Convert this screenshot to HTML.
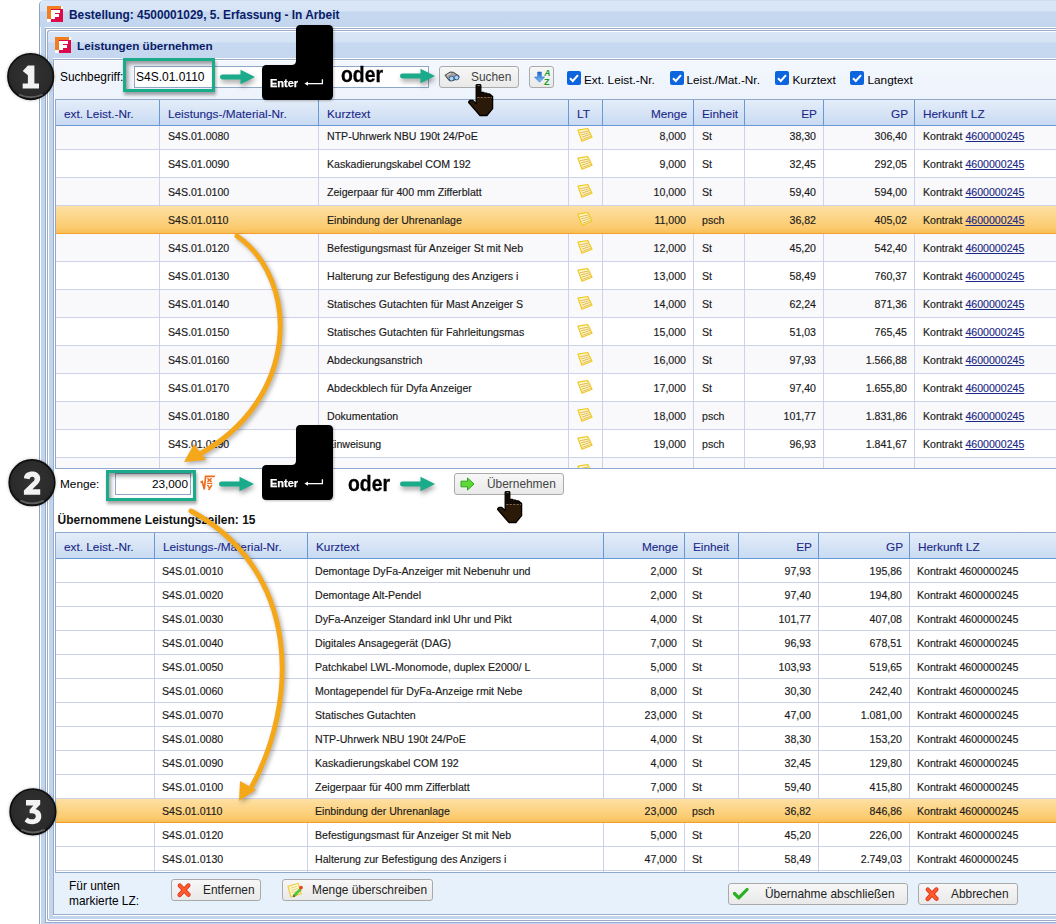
<!DOCTYPE html>
<html><head><meta charset="utf-8"><title>Leistungen übernehmen</title>
<style>
html,body{margin:0;padding:0;}
body{width:1056px;height:924px;position:relative;overflow:hidden;background:#fff;font-family:"Liberation Sans",sans-serif;}
.abs{position:absolute;}
.outer{position:absolute;left:39px;top:0;width:1100px;height:940px;background:#c2d5ed;box-shadow:inset 1px 0 0 #fff;border-left:1px solid #8da5c5;border-top:1px solid #d0ddef;border-top-left-radius:5px;box-sizing:border-box;}
.otitle{position:absolute;left:40px;top:1px;width:1100px;height:26px;background:linear-gradient(#dbe7f7 0,#d6e4f5 10px,#c5d8ef 11px,#c3d6ee 26px);border-top-left-radius:4px;}
.frameA{position:absolute;left:45px;top:28px;width:1100px;height:895px;border:1px solid #9aacc9;border-right:none;background:#fff;box-sizing:border-box;box-shadow:0 -1px 0 #fff;}
.winB{position:absolute;left:47px;top:30px;width:1100px;height:891px;border:1px solid #9aacc9;border-right:none;border-radius:3px 0 0 3px;background:#c2d5ed;box-sizing:border-box;box-shadow:inset 1px 1px 0 #fff, inset 0 -1px 0 #fff;}
.ititle{position:absolute;left:48px;top:32px;width:1100px;height:27px;background:linear-gradient(#d9e6f6 0,#d6e4f5 10px,#c7d9f0 11px,#c4d7ee 27px);border-top-left-radius:2px;}
.panel{position:absolute;left:53px;top:59px;width:1100px;height:856px;border:1px solid #9aacc9;border-right:none;background:#fff;box-sizing:border-box;box-shadow:inset 1px 1px 0 #fff, 0 1px 0 #fff, 0 -1px 0 #fff;}
.toolbar{position:absolute;left:55px;top:61px;width:1100px;height:39px;background:linear-gradient(#f3f7fd,#edf3fc);}
.footer{position:absolute;left:54px;top:873px;width:1100px;height:41px;background:#e7f1fc;}
.ttl{position:absolute;font-weight:bold;font-size:11.8px;color:#15307e;white-space:nowrap;}
.lbl{position:absolute;font-size:11.9px;color:#000;white-space:nowrap;}
.fico{position:absolute;width:16px;height:16px;}
/* tables */
.tbl{position:absolute;border:1px solid #8fa9cc;border-right:none;box-sizing:border-box;overflow:hidden;background:#fff;}
.hdr{position:absolute;left:0;width:100%;background:linear-gradient(#e4edf9,#c9dbf2);border-bottom:1px solid #6a98d4;box-sizing:border-box;}
.hc{position:absolute;top:0;height:25px;line-height:25px;font-size:11.8px;color:#1a2888;-webkit-text-stroke:0.1px #1a2888;border-right:1px solid #6a98d4;box-sizing:border-box;padding:2px 6px 0 8px;white-space:nowrap;overflow:hidden;}
.hc.r{text-align:right;padding-right:6px;}
.row{position:absolute;left:0;width:100%;background:#fff;border-bottom:1px solid #cdd2ea;box-sizing:border-box;}
.row.alt{background:#f9f9fb;}
.row.alt2{background:#fff;}
.row.sel .c{border-right-color:transparent;}
.row.sel{background:linear-gradient(#fee0a3,#fbcb70 80%,#f9bf56);border-bottom:1px solid #f59c2c;}
.c{position:absolute;top:0;height:100%;border-right:1px solid #cdd2ea;box-sizing:border-box;white-space:nowrap;overflow:hidden;color:#1a1a1a;padding:0 8px;-webkit-text-stroke:0.15px #1a1a1a;}
.c.r{text-align:right;padding-right:7px;}
.t1{font-size:10.6px;line-height:28px;padding-top:0;}
.t2{font-size:10.6px;line-height:24px;padding-top:0;padding-left:7px;}
.c u{color:#1b2b85;-webkit-text-stroke:0.15px #1b2b85;}
.note{position:absolute;left:0;top:0;}
.btn{position:absolute;height:22px;box-sizing:border-box;border:1px solid #aaaaaa;border-radius:3px;background:linear-gradient(#f7f7f7,#e9e9e9);font-size:11.9px;color:#333;white-space:nowrap;}
.btn span{position:absolute;top:3px;}
.chk{position:absolute;width:14px;height:14px;border-radius:2px;background:#0c64de;}
.teal{position:absolute;border:3px solid #19ab8a;box-sizing:border-box;box-shadow:1px 3px 3px rgba(0,0,0,.35), inset 2px 3px 4px rgba(0,0,0,.4);}
.input{position:absolute;background:#fff;border:1px solid #8ea6c8;box-sizing:border-box;font-size:12px;color:#000;white-space:nowrap;}
.num{position:absolute;width:47px;height:47px;border-radius:50%;background:#2b2b2b;box-sizing:border-box;border:2px solid #111;box-shadow:0 1px 2px rgba(0,0,0,.3);}
.num span{position:absolute;left:0;width:100%;text-align:center;font-weight:bold;color:#f4f4f4;font-size:30px;}
.oder{position:absolute;font-weight:bold;font-size:19px;color:#000;}

</style></head><body>
<div class="outer"></div>
<div class="otitle"></div>
<svg class="fico" style="left:47px;top:6px" viewBox="0 0 16 16" width="16" height="16" shape-rendering="crispEdges">
<rect x="0" y="0" width="13.5" height="12.5" fill="#f07d1e"/><rect x="3.5" y="3" width="12.5" height="13" fill="#dc0a48"/>
<rect x="13.5" y="0" width="2.5" height="3" fill="#fff"/><rect x="0" y="12.5" width="3.5" height="3.5" fill="#fff"/>
<path d="M4.3 3.5h9v3.2h-5.2v1.6h4.2v2.8h-4.2v1.9h-3.8z" fill="#fff"/></svg>
<div class="abs" style="left:69px;top:4.88px;height:20px;line-height:20px;font-size:11.9px;font-weight:bold;white-space:nowrap;color:#0a1c68;">Bestellung: 4500001029, 5. Erfassung - In Arbeit</div>
<div class="frameA"></div>
<div class="winB"></div>
<div class="ititle"></div>
<svg class="fico" style="left:55px;top:37px" viewBox="0 0 16 16" width="16" height="16" shape-rendering="crispEdges">
<rect x="0" y="0" width="13.5" height="12.5" fill="#f07d1e"/><rect x="3.5" y="3" width="12.5" height="13" fill="#dc0a48"/>
<rect x="13.5" y="0" width="2.5" height="3" fill="#fff"/><rect x="0" y="12.5" width="3.5" height="3.5" fill="#fff"/>
<path d="M4.3 3.5h9v3.2h-5.2v1.6h4.2v2.8h-4.2v1.9h-3.8z" fill="#fff"/></svg>
<div class="abs" style="left:77px;top:35.95px;height:20px;line-height:20px;font-size:11.7px;font-weight:bold;white-space:nowrap;color:#0a1c68;">Leistungen übernehmen</div>
<div class="panel"></div>
<div class="toolbar"></div>
<div class="footer"></div>
<div class="abs" style="left:60px;top:66.88px;height:20px;line-height:20px;font-size:11.9px;font-weight:normal;white-space:nowrap;">Suchbegriff:</div>
<div class="input" style="left:134px;top:66px;width:295px;height:22px"></div>
<div class="abs" style="left:136px;top:66.84px;height:20px;line-height:20px;font-size:12px;font-weight:normal;white-space:nowrap;">S4S.01.0110</div>
<div class="btn" style="left:439px;top:66px;width:80px;height:22px"></div>
<svg class="abs" style="left:444px;top:71px" width="16" height="11" viewBox="0 0 16 11">
<path d="M1 4.3 L6.3 1 L9.6 1.4 L15 5 L14.6 7.6 L9 9.4 L5.4 9.8 Z" fill="#a3a3a3" stroke="#3c3c3c" stroke-width="1"/>
<path d="M3 4.2 L6.8 2.3" stroke="#e8e8e8" stroke-width="0.9"/>
<circle cx="7.6" cy="7.6" r="2.4" fill="#a6d2ff" stroke="#2c4c74" stroke-width="0.8"/>
<circle cx="12.6" cy="6.6" r="2.3" fill="#a6d2ff" stroke="#2c4c74" stroke-width="0.8"/></svg>
<div class="abs" style="left:471px;top:66.88px;height:20px;line-height:20px;font-size:11.9px;font-weight:normal;white-space:nowrap;color:#444;">Suchen</div>
<div class="btn" style="left:529px;top:66px;width:25px;height:22px"></div>
<svg class="abs" style="left:534px;top:69px" width="17" height="16" viewBox="0 0 17 16">
<defs><linearGradient id="ga" x1="0" y1="0" x2="0" y2="1"><stop offset="0" stop-color="#1a64c8"/><stop offset="1" stop-color="#86c6ff"/></linearGradient></defs>
<path d="M3.6 3h3.8v5h3.1l-5 5.2 -5-5.2h3.1z" fill="url(#ga)" stroke="#2a74d4" stroke-width="0.6"/>
<text x="10.2" y="7.2" font-family="Liberation Sans" font-weight="bold" font-style="italic" font-size="8.5" fill="#16a01e">A</text>
<text x="10" y="15.6" font-family="Liberation Sans" font-weight="bold" font-size="9" fill="#16a01e">Z</text></svg>
<div class="chk" style="left:567px;top:71px"><svg width="14" height="14" viewBox="0 0 14 14" style="position:absolute;left:0;top:0"><path d="M3 7.2 L5.8 10 L11 4.2" fill="none" stroke="#fff" stroke-width="2"/></svg></div>
<div class="abs" style="left:584px;top:69.91px;height:20px;line-height:20px;font-size:11.8px;font-weight:normal;white-space:nowrap;">Ext. Leist.-Nr.</div>
<div class="chk" style="left:670px;top:71px"><svg width="14" height="14" viewBox="0 0 14 14" style="position:absolute;left:0;top:0"><path d="M3 7.2 L5.8 10 L11 4.2" fill="none" stroke="#fff" stroke-width="2"/></svg></div>
<div class="abs" style="left:686.5px;top:69.91px;height:20px;line-height:20px;font-size:11.8px;font-weight:normal;white-space:nowrap;">Leist./Mat.-Nr.</div>
<div class="chk" style="left:775px;top:71px"><svg width="14" height="14" viewBox="0 0 14 14" style="position:absolute;left:0;top:0"><path d="M3 7.2 L5.8 10 L11 4.2" fill="none" stroke="#fff" stroke-width="2"/></svg></div>
<div class="abs" style="left:792.5px;top:69.91px;height:20px;line-height:20px;font-size:11.8px;font-weight:normal;white-space:nowrap;">Kurztext</div>
<div class="chk" style="left:850px;top:71px"><svg width="14" height="14" viewBox="0 0 14 14" style="position:absolute;left:0;top:0"><path d="M3 7.2 L5.8 10 L11 4.2" fill="none" stroke="#fff" stroke-width="2"/></svg></div>
<div class="abs" style="left:867.5px;top:69.91px;height:20px;line-height:20px;font-size:11.8px;font-weight:normal;white-space:nowrap;">Langtext</div>
<div class="tbl" style="left:55px;top:99px;width:1050px;height:370px">
<div class="row alt" style="top:22px;height:28px">
<div class="c t1 l" style="left:0px;width:104px"></div>
<div class="c t1 l" style="left:104px;width:159px">S4S.01.0080</div>
<div class="c t1 l" style="left:263px;width:250px">NTP-Uhrwerk NBU 190t 24/PoE</div>
<div class="c" style="left:513px;width:34px"><svg class="note" width="28" height="28" viewBox="0 0 28 28"><path d="M9 8.2 L18.7 6.5 L23 15.3 L13 19.3 Z" fill="#fff9c4" stroke="#f0c620" stroke-width="1.2" stroke-linejoin="round"/><path d="M11 10.8 L19 9 M11.8 13 L19.9 10.8 M12.6 15.2 L20.8 12.5 M13.3 17.3 L21.6 14.3" stroke="#dcb050" stroke-width="0.9"/></svg></div>
<div class="c t1 r" style="left:547px;width:91px">8,000</div>
<div class="c t1 l" style="left:638px;width:51px">St</div>
<div class="c t1 r" style="left:689px;width:79px">38,30</div>
<div class="c t1 r" style="left:768px;width:91px">306,40</div>
<div class="c t1" style="left:859px;width:186px">Kontrakt <u>4600000245</u></div>
</div>
<div class="row" style="top:50px;height:28px">
<div class="c t1 l" style="left:0px;width:104px"></div>
<div class="c t1 l" style="left:104px;width:159px">S4S.01.0090</div>
<div class="c t1 l" style="left:263px;width:250px">Kaskadierungskabel COM 192</div>
<div class="c" style="left:513px;width:34px"><svg class="note" width="28" height="28" viewBox="0 0 28 28"><path d="M9 8.2 L18.7 6.5 L23 15.3 L13 19.3 Z" fill="#fff9c4" stroke="#f0c620" stroke-width="1.2" stroke-linejoin="round"/><path d="M11 10.8 L19 9 M11.8 13 L19.9 10.8 M12.6 15.2 L20.8 12.5 M13.3 17.3 L21.6 14.3" stroke="#dcb050" stroke-width="0.9"/></svg></div>
<div class="c t1 r" style="left:547px;width:91px">9,000</div>
<div class="c t1 l" style="left:638px;width:51px">St</div>
<div class="c t1 r" style="left:689px;width:79px">32,45</div>
<div class="c t1 r" style="left:768px;width:91px">292,05</div>
<div class="c t1" style="left:859px;width:186px">Kontrakt <u>4600000245</u></div>
</div>
<div class="row alt" style="top:78px;height:28px">
<div class="c t1 l" style="left:0px;width:104px"></div>
<div class="c t1 l" style="left:104px;width:159px">S4S.01.0100</div>
<div class="c t1 l" style="left:263px;width:250px">Zeigerpaar für 400 mm Zifferblatt</div>
<div class="c" style="left:513px;width:34px"><svg class="note" width="28" height="28" viewBox="0 0 28 28"><path d="M9 8.2 L18.7 6.5 L23 15.3 L13 19.3 Z" fill="#fff9c4" stroke="#f0c620" stroke-width="1.2" stroke-linejoin="round"/><path d="M11 10.8 L19 9 M11.8 13 L19.9 10.8 M12.6 15.2 L20.8 12.5 M13.3 17.3 L21.6 14.3" stroke="#dcb050" stroke-width="0.9"/></svg></div>
<div class="c t1 r" style="left:547px;width:91px">10,000</div>
<div class="c t1 l" style="left:638px;width:51px">St</div>
<div class="c t1 r" style="left:689px;width:79px">59,40</div>
<div class="c t1 r" style="left:768px;width:91px">594,00</div>
<div class="c t1" style="left:859px;width:186px">Kontrakt <u>4600000245</u></div>
</div>
<div class="row sel" style="top:106px;height:28px">
<div class="c t1 l" style="left:0px;width:104px"></div>
<div class="c t1 l" style="left:104px;width:159px">S4S.01.0110</div>
<div class="c t1 l" style="left:263px;width:250px">Einbindung der Uhrenanlage</div>
<div class="c" style="left:513px;width:34px"><svg class="note" width="28" height="28" viewBox="0 0 28 28"><path d="M9 8.2 L18.7 6.5 L23 15.3 L13 19.3 Z" fill="#fff9c4" stroke="#f0c620" stroke-width="1.2" stroke-linejoin="round"/><path d="M11 10.8 L19 9 M11.8 13 L19.9 10.8 M12.6 15.2 L20.8 12.5 M13.3 17.3 L21.6 14.3" stroke="#dcb050" stroke-width="0.9"/></svg></div>
<div class="c t1 r" style="left:547px;width:91px">11,000</div>
<div class="c t1 l" style="left:638px;width:51px">psch</div>
<div class="c t1 r" style="left:689px;width:79px">36,82</div>
<div class="c t1 r" style="left:768px;width:91px">405,02</div>
<div class="c t1" style="left:859px;width:186px">Kontrakt <u>4600000245</u></div>
</div>
<div class="row alt" style="top:134px;height:28px">
<div class="c t1 l" style="left:0px;width:104px"></div>
<div class="c t1 l" style="left:104px;width:159px">S4S.01.0120</div>
<div class="c t1 l" style="left:263px;width:250px">Befestigungsmast für Anzeiger St mit Neb</div>
<div class="c" style="left:513px;width:34px"><svg class="note" width="28" height="28" viewBox="0 0 28 28"><path d="M9 8.2 L18.7 6.5 L23 15.3 L13 19.3 Z" fill="#fff9c4" stroke="#f0c620" stroke-width="1.2" stroke-linejoin="round"/><path d="M11 10.8 L19 9 M11.8 13 L19.9 10.8 M12.6 15.2 L20.8 12.5 M13.3 17.3 L21.6 14.3" stroke="#dcb050" stroke-width="0.9"/></svg></div>
<div class="c t1 r" style="left:547px;width:91px">12,000</div>
<div class="c t1 l" style="left:638px;width:51px">St</div>
<div class="c t1 r" style="left:689px;width:79px">45,20</div>
<div class="c t1 r" style="left:768px;width:91px">542,40</div>
<div class="c t1" style="left:859px;width:186px">Kontrakt <u>4600000245</u></div>
</div>
<div class="row" style="top:162px;height:28px">
<div class="c t1 l" style="left:0px;width:104px"></div>
<div class="c t1 l" style="left:104px;width:159px">S4S.01.0130</div>
<div class="c t1 l" style="left:263px;width:250px">Halterung zur Befestigung des Anzigers i</div>
<div class="c" style="left:513px;width:34px"><svg class="note" width="28" height="28" viewBox="0 0 28 28"><path d="M9 8.2 L18.7 6.5 L23 15.3 L13 19.3 Z" fill="#fff9c4" stroke="#f0c620" stroke-width="1.2" stroke-linejoin="round"/><path d="M11 10.8 L19 9 M11.8 13 L19.9 10.8 M12.6 15.2 L20.8 12.5 M13.3 17.3 L21.6 14.3" stroke="#dcb050" stroke-width="0.9"/></svg></div>
<div class="c t1 r" style="left:547px;width:91px">13,000</div>
<div class="c t1 l" style="left:638px;width:51px">St</div>
<div class="c t1 r" style="left:689px;width:79px">58,49</div>
<div class="c t1 r" style="left:768px;width:91px">760,37</div>
<div class="c t1" style="left:859px;width:186px">Kontrakt <u>4600000245</u></div>
</div>
<div class="row alt" style="top:190px;height:28px">
<div class="c t1 l" style="left:0px;width:104px"></div>
<div class="c t1 l" style="left:104px;width:159px">S4S.01.0140</div>
<div class="c t1 l" style="left:263px;width:250px">Statisches Gutachten für Mast Anzeiger S</div>
<div class="c" style="left:513px;width:34px"><svg class="note" width="28" height="28" viewBox="0 0 28 28"><path d="M9 8.2 L18.7 6.5 L23 15.3 L13 19.3 Z" fill="#fff9c4" stroke="#f0c620" stroke-width="1.2" stroke-linejoin="round"/><path d="M11 10.8 L19 9 M11.8 13 L19.9 10.8 M12.6 15.2 L20.8 12.5 M13.3 17.3 L21.6 14.3" stroke="#dcb050" stroke-width="0.9"/></svg></div>
<div class="c t1 r" style="left:547px;width:91px">14,000</div>
<div class="c t1 l" style="left:638px;width:51px">St</div>
<div class="c t1 r" style="left:689px;width:79px">62,24</div>
<div class="c t1 r" style="left:768px;width:91px">871,36</div>
<div class="c t1" style="left:859px;width:186px">Kontrakt <u>4600000245</u></div>
</div>
<div class="row" style="top:218px;height:28px">
<div class="c t1 l" style="left:0px;width:104px"></div>
<div class="c t1 l" style="left:104px;width:159px">S4S.01.0150</div>
<div class="c t1 l" style="left:263px;width:250px">Statisches Gutachten für Fahrleitungsmas</div>
<div class="c" style="left:513px;width:34px"><svg class="note" width="28" height="28" viewBox="0 0 28 28"><path d="M9 8.2 L18.7 6.5 L23 15.3 L13 19.3 Z" fill="#fff9c4" stroke="#f0c620" stroke-width="1.2" stroke-linejoin="round"/><path d="M11 10.8 L19 9 M11.8 13 L19.9 10.8 M12.6 15.2 L20.8 12.5 M13.3 17.3 L21.6 14.3" stroke="#dcb050" stroke-width="0.9"/></svg></div>
<div class="c t1 r" style="left:547px;width:91px">15,000</div>
<div class="c t1 l" style="left:638px;width:51px">St</div>
<div class="c t1 r" style="left:689px;width:79px">51,03</div>
<div class="c t1 r" style="left:768px;width:91px">765,45</div>
<div class="c t1" style="left:859px;width:186px">Kontrakt <u>4600000245</u></div>
</div>
<div class="row alt" style="top:246px;height:28px">
<div class="c t1 l" style="left:0px;width:104px"></div>
<div class="c t1 l" style="left:104px;width:159px">S4S.01.0160</div>
<div class="c t1 l" style="left:263px;width:250px">Abdeckungsanstrich</div>
<div class="c" style="left:513px;width:34px"><svg class="note" width="28" height="28" viewBox="0 0 28 28"><path d="M9 8.2 L18.7 6.5 L23 15.3 L13 19.3 Z" fill="#fff9c4" stroke="#f0c620" stroke-width="1.2" stroke-linejoin="round"/><path d="M11 10.8 L19 9 M11.8 13 L19.9 10.8 M12.6 15.2 L20.8 12.5 M13.3 17.3 L21.6 14.3" stroke="#dcb050" stroke-width="0.9"/></svg></div>
<div class="c t1 r" style="left:547px;width:91px">16,000</div>
<div class="c t1 l" style="left:638px;width:51px">St</div>
<div class="c t1 r" style="left:689px;width:79px">97,93</div>
<div class="c t1 r" style="left:768px;width:91px">1.566,88</div>
<div class="c t1" style="left:859px;width:186px">Kontrakt <u>4600000245</u></div>
</div>
<div class="row" style="top:274px;height:28px">
<div class="c t1 l" style="left:0px;width:104px"></div>
<div class="c t1 l" style="left:104px;width:159px">S4S.01.0170</div>
<div class="c t1 l" style="left:263px;width:250px">Abdeckblech für Dyfa Anzeiger</div>
<div class="c" style="left:513px;width:34px"><svg class="note" width="28" height="28" viewBox="0 0 28 28"><path d="M9 8.2 L18.7 6.5 L23 15.3 L13 19.3 Z" fill="#fff9c4" stroke="#f0c620" stroke-width="1.2" stroke-linejoin="round"/><path d="M11 10.8 L19 9 M11.8 13 L19.9 10.8 M12.6 15.2 L20.8 12.5 M13.3 17.3 L21.6 14.3" stroke="#dcb050" stroke-width="0.9"/></svg></div>
<div class="c t1 r" style="left:547px;width:91px">17,000</div>
<div class="c t1 l" style="left:638px;width:51px">St</div>
<div class="c t1 r" style="left:689px;width:79px">97,40</div>
<div class="c t1 r" style="left:768px;width:91px">1.655,80</div>
<div class="c t1" style="left:859px;width:186px">Kontrakt <u>4600000245</u></div>
</div>
<div class="row alt" style="top:302px;height:28px">
<div class="c t1 l" style="left:0px;width:104px"></div>
<div class="c t1 l" style="left:104px;width:159px">S4S.01.0180</div>
<div class="c t1 l" style="left:263px;width:250px">Dokumentation</div>
<div class="c" style="left:513px;width:34px"><svg class="note" width="28" height="28" viewBox="0 0 28 28"><path d="M9 8.2 L18.7 6.5 L23 15.3 L13 19.3 Z" fill="#fff9c4" stroke="#f0c620" stroke-width="1.2" stroke-linejoin="round"/><path d="M11 10.8 L19 9 M11.8 13 L19.9 10.8 M12.6 15.2 L20.8 12.5 M13.3 17.3 L21.6 14.3" stroke="#dcb050" stroke-width="0.9"/></svg></div>
<div class="c t1 r" style="left:547px;width:91px">18,000</div>
<div class="c t1 l" style="left:638px;width:51px">psch</div>
<div class="c t1 r" style="left:689px;width:79px">101,77</div>
<div class="c t1 r" style="left:768px;width:91px">1.831,86</div>
<div class="c t1" style="left:859px;width:186px">Kontrakt <u>4600000245</u></div>
</div>
<div class="row" style="top:330px;height:28px">
<div class="c t1 l" style="left:0px;width:104px"></div>
<div class="c t1 l" style="left:104px;width:159px">S4S.01.0190</div>
<div class="c t1 l" style="left:263px;width:250px">Einweisung</div>
<div class="c" style="left:513px;width:34px"><svg class="note" width="28" height="28" viewBox="0 0 28 28"><path d="M9 8.2 L18.7 6.5 L23 15.3 L13 19.3 Z" fill="#fff9c4" stroke="#f0c620" stroke-width="1.2" stroke-linejoin="round"/><path d="M11 10.8 L19 9 M11.8 13 L19.9 10.8 M12.6 15.2 L20.8 12.5 M13.3 17.3 L21.6 14.3" stroke="#dcb050" stroke-width="0.9"/></svg></div>
<div class="c t1 r" style="left:547px;width:91px">19,000</div>
<div class="c t1 l" style="left:638px;width:51px">psch</div>
<div class="c t1 r" style="left:689px;width:79px">96,93</div>
<div class="c t1 r" style="left:768px;width:91px">1.841,67</div>
<div class="c t1" style="left:859px;width:186px">Kontrakt <u>4600000245</u></div>
</div>
<div class="row alt" style="top:358px;height:28px">
<div class="c t1 l" style="left:0px;width:104px"></div>
<div class="c t1 l" style="left:104px;width:159px"></div>
<div class="c t1 l" style="left:263px;width:250px"></div>
<div class="c" style="left:513px;width:34px"><svg class="note" width="28" height="28" viewBox="0 0 28 28"><path d="M9 8.2 L18.7 6.5 L23 15.3 L13 19.3 Z" fill="#fff9c4" stroke="#f0c620" stroke-width="1.2" stroke-linejoin="round"/><path d="M11 10.8 L19 9 M11.8 13 L19.9 10.8 M12.6 15.2 L20.8 12.5 M13.3 17.3 L21.6 14.3" stroke="#dcb050" stroke-width="0.9"/></svg></div>
<div class="c t1 r" style="left:547px;width:91px"></div>
<div class="c t1 l" style="left:638px;width:51px"></div>
<div class="c t1 r" style="left:689px;width:79px"></div>
<div class="c t1 r" style="left:768px;width:91px"></div>
<div class="c t1 l" style="left:859px;width:186px"></div>
</div>
<div class="hdr" style="top:0;height:26px">
<div class="hc l" style="left:0px;width:104px">ext. Leist.-Nr.</div>
<div class="hc l" style="left:104px;width:159px">Leistungs-/Material-Nr.</div>
<div class="hc l" style="left:263px;width:250px">Kurztext</div>
<div class="hc l" style="left:513px;width:34px">LT</div>
<div class="hc r" style="left:547px;width:91px">Menge</div>
<div class="hc l" style="left:638px;width:51px">Einheit</div>
<div class="hc r" style="left:689px;width:79px">EP</div>
<div class="hc r" style="left:768px;width:91px">GP</div>
<div class="hc l" style="left:859px;width:186px">Herkunft LZ</div>
</div>
</div>
<div class="abs" style="left:60px;top:473.71px;height:20px;line-height:20px;font-size:11.8px;font-weight:normal;white-space:nowrap;">Menge:</div>
<div class="input" style="left:115px;top:473px;width:76px;height:22px"></div>
<div class="abs" style="left:115px;top:471.5px;width:73px;height:22px;line-height:22px;font-size:11.8px;text-align:right;padding-top:1px">23,000</div>
<svg class="abs" style="left:200px;top:475px" width="16" height="16" viewBox="0 0 16 16">
<path d="M0.5 7.6 L2.2 6.6 L4.3 14.3 L5.6 1.3 H14.8" fill="none" stroke="#f06a1c" stroke-width="1.7" stroke-linejoin="miter"/>
<path d="M7.4 3.2 L11.6 6.9 M11.6 3.2 L7.4 6.9" stroke="#f06a1c" stroke-width="1.5"/>
<path d="M7.2 8.4 H12.3" stroke="#f06a1c" stroke-width="1.2"/>
<path d="M7.4 9.8 L9.6 13.2 M11.9 9.8 L8.6 15" stroke="#f06a1c" stroke-width="1.5"/></svg>
<div class="btn" style="left:454px;top:473px;width:110px;height:22px"></div>
<svg class="abs" style="left:460px;top:477px" width="15" height="14" viewBox="0 0 15 14">
<path d="M1 4.2h6.5V1l6.5 6-6.5 6V9.8H1z" fill="#5fd83a" stroke="#28a818" stroke-width="1"/></svg>
<div class="abs" style="left:487px;top:473.88px;height:20px;line-height:20px;font-size:11.9px;font-weight:normal;white-space:nowrap;color:#444;">Übernehmen</div>
<div class="abs" style="left:57.5px;top:510.34px;height:20px;line-height:20px;font-size:12px;font-weight:bold;white-space:nowrap;color:#111;">Übernommene Leistungszeilen: 15</div>
<div class="tbl" style="left:55px;top:532px;width:1050px;height:341px">
<div class="row" style="top:26px;height:24px">
<div class="c t2 l" style="left:0px;width:99px"></div>
<div class="c t2 l" style="left:99px;width:153px">S4S.01.0010</div>
<div class="c t2 l" style="left:252px;width:296px">Demontage DyFa-Anzeiger mit Nebenuhr und</div>
<div class="c t2 r" style="left:548px;width:81px">2,000</div>
<div class="c t2 l" style="left:629px;width:54px">St</div>
<div class="c t2 r" style="left:683px;width:80px">97,93</div>
<div class="c t2 r" style="left:763px;width:91px">195,86</div>
<div class="c t2 l" style="left:854px;width:191px">Kontrakt 4600000245</div>
</div>
<div class="row alt2" style="top:50px;height:24px">
<div class="c t2 l" style="left:0px;width:99px"></div>
<div class="c t2 l" style="left:99px;width:153px">S4S.01.0020</div>
<div class="c t2 l" style="left:252px;width:296px">Demontage Alt-Pendel</div>
<div class="c t2 r" style="left:548px;width:81px">2,000</div>
<div class="c t2 l" style="left:629px;width:54px">St</div>
<div class="c t2 r" style="left:683px;width:80px">97,40</div>
<div class="c t2 r" style="left:763px;width:91px">194,80</div>
<div class="c t2 l" style="left:854px;width:191px">Kontrakt 4600000245</div>
</div>
<div class="row" style="top:74px;height:24px">
<div class="c t2 l" style="left:0px;width:99px"></div>
<div class="c t2 l" style="left:99px;width:153px">S4S.01.0030</div>
<div class="c t2 l" style="left:252px;width:296px">DyFa-Anzeiger Standard inkl Uhr und Pikt</div>
<div class="c t2 r" style="left:548px;width:81px">4,000</div>
<div class="c t2 l" style="left:629px;width:54px">St</div>
<div class="c t2 r" style="left:683px;width:80px">101,77</div>
<div class="c t2 r" style="left:763px;width:91px">407,08</div>
<div class="c t2 l" style="left:854px;width:191px">Kontrakt 4600000245</div>
</div>
<div class="row alt2" style="top:98px;height:24px">
<div class="c t2 l" style="left:0px;width:99px"></div>
<div class="c t2 l" style="left:99px;width:153px">S4S.01.0040</div>
<div class="c t2 l" style="left:252px;width:296px">Digitales Ansagegerät (DAG)</div>
<div class="c t2 r" style="left:548px;width:81px">7,000</div>
<div class="c t2 l" style="left:629px;width:54px">St</div>
<div class="c t2 r" style="left:683px;width:80px">96,93</div>
<div class="c t2 r" style="left:763px;width:91px">678,51</div>
<div class="c t2 l" style="left:854px;width:191px">Kontrakt 4600000245</div>
</div>
<div class="row" style="top:122px;height:24px">
<div class="c t2 l" style="left:0px;width:99px"></div>
<div class="c t2 l" style="left:99px;width:153px">S4S.01.0050</div>
<div class="c t2 l" style="left:252px;width:296px">Patchkabel LWL-Monomode, duplex E2000/ L</div>
<div class="c t2 r" style="left:548px;width:81px">5,000</div>
<div class="c t2 l" style="left:629px;width:54px">St</div>
<div class="c t2 r" style="left:683px;width:80px">103,93</div>
<div class="c t2 r" style="left:763px;width:91px">519,65</div>
<div class="c t2 l" style="left:854px;width:191px">Kontrakt 4600000245</div>
</div>
<div class="row alt2" style="top:146px;height:24px">
<div class="c t2 l" style="left:0px;width:99px"></div>
<div class="c t2 l" style="left:99px;width:153px">S4S.01.0060</div>
<div class="c t2 l" style="left:252px;width:296px">Montagependel für DyFa-Anzeige rmit Nebe</div>
<div class="c t2 r" style="left:548px;width:81px">8,000</div>
<div class="c t2 l" style="left:629px;width:54px">St</div>
<div class="c t2 r" style="left:683px;width:80px">30,30</div>
<div class="c t2 r" style="left:763px;width:91px">242,40</div>
<div class="c t2 l" style="left:854px;width:191px">Kontrakt 4600000245</div>
</div>
<div class="row" style="top:170px;height:24px">
<div class="c t2 l" style="left:0px;width:99px"></div>
<div class="c t2 l" style="left:99px;width:153px">S4S.01.0070</div>
<div class="c t2 l" style="left:252px;width:296px">Statisches Gutachten</div>
<div class="c t2 r" style="left:548px;width:81px">23,000</div>
<div class="c t2 l" style="left:629px;width:54px">St</div>
<div class="c t2 r" style="left:683px;width:80px">47,00</div>
<div class="c t2 r" style="left:763px;width:91px">1.081,00</div>
<div class="c t2 l" style="left:854px;width:191px">Kontrakt 4600000245</div>
</div>
<div class="row alt2" style="top:194px;height:24px">
<div class="c t2 l" style="left:0px;width:99px"></div>
<div class="c t2 l" style="left:99px;width:153px">S4S.01.0080</div>
<div class="c t2 l" style="left:252px;width:296px">NTP-Uhrwerk NBU 190t 24/PoE</div>
<div class="c t2 r" style="left:548px;width:81px">4,000</div>
<div class="c t2 l" style="left:629px;width:54px">St</div>
<div class="c t2 r" style="left:683px;width:80px">38,30</div>
<div class="c t2 r" style="left:763px;width:91px">153,20</div>
<div class="c t2 l" style="left:854px;width:191px">Kontrakt 4600000245</div>
</div>
<div class="row" style="top:218px;height:24px">
<div class="c t2 l" style="left:0px;width:99px"></div>
<div class="c t2 l" style="left:99px;width:153px">S4S.01.0090</div>
<div class="c t2 l" style="left:252px;width:296px">Kaskadierungskabel COM 192</div>
<div class="c t2 r" style="left:548px;width:81px">4,000</div>
<div class="c t2 l" style="left:629px;width:54px">St</div>
<div class="c t2 r" style="left:683px;width:80px">32,45</div>
<div class="c t2 r" style="left:763px;width:91px">129,80</div>
<div class="c t2 l" style="left:854px;width:191px">Kontrakt 4600000245</div>
</div>
<div class="row alt2" style="top:242px;height:24px">
<div class="c t2 l" style="left:0px;width:99px"></div>
<div class="c t2 l" style="left:99px;width:153px">S4S.01.0100</div>
<div class="c t2 l" style="left:252px;width:296px">Zeigerpaar für 400 mm Zifferblatt</div>
<div class="c t2 r" style="left:548px;width:81px">7,000</div>
<div class="c t2 l" style="left:629px;width:54px">St</div>
<div class="c t2 r" style="left:683px;width:80px">59,40</div>
<div class="c t2 r" style="left:763px;width:91px">415,80</div>
<div class="c t2 l" style="left:854px;width:191px">Kontrakt 4600000245</div>
</div>
<div class="row sel" style="top:266px;height:24px">
<div class="c t2 l" style="left:0px;width:99px"></div>
<div class="c t2 l" style="left:99px;width:153px">S4S.01.0110</div>
<div class="c t2 l" style="left:252px;width:296px">Einbindung der Uhrenanlage</div>
<div class="c t2 r" style="left:548px;width:81px">23,000</div>
<div class="c t2 l" style="left:629px;width:54px">psch</div>
<div class="c t2 r" style="left:683px;width:80px">36,82</div>
<div class="c t2 r" style="left:763px;width:91px">846,86</div>
<div class="c t2 l" style="left:854px;width:191px">Kontrakt 4600000245</div>
</div>
<div class="row alt2" style="top:290px;height:24px">
<div class="c t2 l" style="left:0px;width:99px"></div>
<div class="c t2 l" style="left:99px;width:153px">S4S.01.0120</div>
<div class="c t2 l" style="left:252px;width:296px">Befestigungsmast für Anzeiger St mit Neb</div>
<div class="c t2 r" style="left:548px;width:81px">5,000</div>
<div class="c t2 l" style="left:629px;width:54px">St</div>
<div class="c t2 r" style="left:683px;width:80px">45,20</div>
<div class="c t2 r" style="left:763px;width:91px">226,00</div>
<div class="c t2 l" style="left:854px;width:191px">Kontrakt 4600000245</div>
</div>
<div class="row" style="top:314px;height:24px">
<div class="c t2 l" style="left:0px;width:99px"></div>
<div class="c t2 l" style="left:99px;width:153px">S4S.01.0130</div>
<div class="c t2 l" style="left:252px;width:296px">Halterung zur Befestigung des Anzigers i</div>
<div class="c t2 r" style="left:548px;width:81px">47,000</div>
<div class="c t2 l" style="left:629px;width:54px">St</div>
<div class="c t2 r" style="left:683px;width:80px">58,49</div>
<div class="c t2 r" style="left:763px;width:91px">2.749,03</div>
<div class="c t2 l" style="left:854px;width:191px">Kontrakt 4600000245</div>
</div>
<div class="row alt2" style="top:338px;height:24px">
<div class="c t2 l" style="left:0px;width:99px"></div>
<div class="c t2 l" style="left:99px;width:153px"></div>
<div class="c t2 l" style="left:252px;width:296px"></div>
<div class="c t2 r" style="left:548px;width:81px"></div>
<div class="c t2 l" style="left:629px;width:54px"></div>
<div class="c t2 r" style="left:683px;width:80px"></div>
<div class="c t2 r" style="left:763px;width:91px"></div>
<div class="c t2 l" style="left:854px;width:191px"></div>
</div>
<div class="hdr" style="top:0;height:26px">
<div class="hc l" style="left:0px;width:99px">ext. Leist.-Nr.</div>
<div class="hc l" style="left:99px;width:153px">Leistungs-/Material-Nr.</div>
<div class="hc l" style="left:252px;width:296px">Kurztext</div>
<div class="hc r" style="left:548px;width:81px">Menge</div>
<div class="hc l" style="left:629px;width:54px">Einheit</div>
<div class="hc r" style="left:683px;width:80px">EP</div>
<div class="hc r" style="left:763px;width:91px">GP</div>
<div class="hc l" style="left:854px;width:191px">Herkunft LZ</div>
</div>
</div>
<div class="abs" style="left:69px;top:876.38px;height:20px;line-height:20px;font-size:11.9px;font-weight:normal;white-space:nowrap;">Für unten</div>
<div class="abs" style="left:69px;top:890.88px;height:20px;line-height:20px;font-size:11.9px;font-weight:normal;white-space:nowrap;">markierte LZ:</div>
<div class="btn" style="left:171px;top:879px;width:90px;height:22px"></div>
<svg class="abs" style="left:176px;top:882px" width="16" height="16" viewBox="0 0 16 16">
<path d="M3.8 3.6 L12.6 12.8 M12.4 3.4 L3.6 13" stroke="#d8281a" stroke-width="4.2" stroke-linecap="round"/><path d="M3.8 3.6 L12.6 12.8 M12.4 3.4 L3.6 13" stroke="#ff5a2a" stroke-width="2.8" stroke-linecap="round"/></svg>
<div class="abs" style="left:203px;top:879.88px;height:20px;line-height:20px;font-size:11.9px;font-weight:normal;white-space:nowrap;color:#222;">Entfernen</div>
<div class="btn" style="left:282px;top:879px;width:151px;height:22px"></div>
<svg class="abs" style="left:287px;top:882px" width="17" height="16" viewBox="0 0 17 16">
<g transform="rotate(-16 7 8)"><rect x="2.2" y="2.8" width="10.6" height="10.8" fill="#fffbd0" stroke="#f2c834" stroke-width="1.1"/>
<path d="M4 5.3h7M4 7.6h7M4 9.9h5" stroke="#e6cf78" stroke-width="0.9"/></g>
<path d="M6.6 12.6 L12.6 6.4 L14.3 8.1 L8.3 14.3 L6.1 14.9 Z" fill="#56cc3c" stroke="#3a9c28" stroke-width="0.5"/>
<path d="M6.1 14.9 L6.6 12.6 L8.3 14.3 Z" fill="#5a4a30"/>
<circle cx="14" cy="5.6" r="1.9" fill="#e8441e"/></svg>
<div class="abs" style="left:312px;top:879.88px;height:20px;line-height:20px;font-size:11.9px;font-weight:normal;white-space:nowrap;color:#222;">Menge überschreiben</div>
<div class="btn" style="left:728px;top:883px;width:180px;height:22px"></div>
<svg class="abs" style="left:733px;top:887px" width="16" height="13" viewBox="0 0 16 13">
<path d="M1.5 6.5 L5.8 10.8 L14 2.5" fill="none" stroke="#28b020" stroke-width="3.2" stroke-linecap="round" stroke-linejoin="round"/></svg>
<div class="abs" style="left:765px;top:883.88px;height:20px;line-height:20px;font-size:11.9px;font-weight:normal;white-space:nowrap;color:#222;">Übernahme abschließen</div>
<div class="btn" style="left:918px;top:883px;width:100px;height:22px"></div>
<svg class="abs" style="left:924px;top:886px" width="16" height="16" viewBox="0 0 16 16">
<path d="M3.8 3.6 L12.6 12.8 M12.4 3.4 L3.6 13" stroke="#d8281a" stroke-width="4.2" stroke-linecap="round"/><path d="M3.8 3.6 L12.6 12.8 M12.4 3.4 L3.6 13" stroke="#ff5a2a" stroke-width="2.8" stroke-linecap="round"/></svg>
<div class="abs" style="left:951px;top:883.88px;height:20px;line-height:20px;font-size:11.9px;font-weight:normal;white-space:nowrap;color:#222;">Abbrechen</div>
<div class="teal" style="left:123px;top:58px;width:92px;height:34px"></div>
<div class="teal" style="left:106px;top:470px;width:90px;height:31px"></div>
<svg class="abs" style="left:261px;top:25px;filter:drop-shadow(1px 1px 1px rgba(0,0,0,.25))" width="74" height="77" viewBox="0 0 74 77">
<path d="M39.5 0 H67.5 Q72 0 72 4.5 V70 Q72 75 67.5 75 H5.5 Q1 75 1 70.5 V44.5 Q1 40 5.5 40 H30.5 Q35 40 35 35.5 V4.5 Q35 0 39.5 0 Z" fill="#000"/>
<text x="9" y="62" font-family="Liberation Sans" font-weight="bold" font-size="11" fill="#fff" stroke="#fff" stroke-width="0.25">Enter</text>
<path d="M45 58.6 H61.4 V54.3" fill="none" stroke="#fff" stroke-width="1.3"/><path d="M43.5 58.6 L47 56.4 V60.8 Z" fill="#fff"/></svg>
<svg class="abs" style="left:261px;top:425px;filter:drop-shadow(1px 1px 1px rgba(0,0,0,.25))" width="74" height="77" viewBox="0 0 74 77">
<path d="M39.5 0 H67.5 Q72 0 72 4.5 V70 Q72 75 67.5 75 H5.5 Q1 75 1 70.5 V44.5 Q1 40 5.5 40 H30.5 Q35 40 35 35.5 V4.5 Q35 0 39.5 0 Z" fill="#000"/>
<text x="9" y="62" font-family="Liberation Sans" font-weight="bold" font-size="11" fill="#fff" stroke="#fff" stroke-width="0.25">Enter</text>
<path d="M45 58.6 H61.4 V54.3" fill="none" stroke="#fff" stroke-width="1.3"/><path d="M43.5 58.6 L47 56.4 V60.8 Z" fill="#fff"/></svg>
<div class="abs" style="left:340.8px;top:64.55px;height:20px;line-height:20px;font-size:21.5px;font-weight:bold;white-space:nowrap;transform:scaleX(0.9);transform-origin:0 0;color:#000;-webkit-text-stroke:0.3px #000;">oder</div>
<div class="abs" style="left:347.6px;top:473.85px;height:20px;line-height:20px;font-size:21.5px;font-weight:bold;white-space:nowrap;transform:scaleX(0.9);transform-origin:0 0;color:#000;-webkit-text-stroke:0.3px #000;">oder</div>
<svg class="abs" style="left:218.5px;top:64.5px;filter:drop-shadow(1px 3.5px 2.5px rgba(0,0,0,.38))" width="40" height="24" viewBox="-1 -12 40 24">
<path d="M2.4 -2.4 H20.5 V-7.35 L35 0 L20.5 7.35 V2.4 H2.4 A2.4 2.4 0 0 1 2.4 -2.4 Z" fill="#19ab8a"/></svg>
<svg class="abs" style="left:399px;top:64.4px;filter:drop-shadow(1px 3.5px 2.5px rgba(0,0,0,.38))" width="40" height="24" viewBox="-1 -12 40 24">
<path d="M2.4 -2.4 H20.5 V-7.35 L35 0 L20.5 7.35 V2.4 H2.4 A2.4 2.4 0 0 1 2.4 -2.4 Z" fill="#19ab8a"/></svg>
<svg class="abs" style="left:218px;top:471.5px;filter:drop-shadow(1px 3.5px 2.5px rgba(0,0,0,.38))" width="40" height="24" viewBox="-1 -12 40 24">
<path d="M2.4 -2.4 H20.5 V-7.35 L35 0 L20.5 7.35 V2.4 H2.4 A2.4 2.4 0 0 1 2.4 -2.4 Z" fill="#19ab8a"/></svg>
<svg class="abs" style="left:399px;top:472.4px;filter:drop-shadow(1px 3.5px 2.5px rgba(0,0,0,.38))" width="40" height="24" viewBox="-1 -12 40 24">
<path d="M2.4 -2.4 H20.5 V-7.35 L35 0 L20.5 7.35 V2.4 H2.4 A2.4 2.4 0 0 1 2.4 -2.4 Z" fill="#19ab8a"/></svg>
<svg class="abs" style="left:0;top:0" width="70" height="924" viewBox="0 0 70 924">
<defs><radialGradient id="cg" cx="0.5" cy="0.45" r="0.55"><stop offset="0" stop-color="#333"/><stop offset="0.85" stop-color="#2a2a2a"/><stop offset="1" stop-color="#1a1a1a"/></radialGradient></defs>
<g style="filter:drop-shadow(0 0 1.5px rgba(0,0,0,.25))">
<circle cx="30.7" cy="76.6" r="22.8" fill="url(#cg)" stroke="#0d0d0d" stroke-width="1.6"/>
<circle cx="32" cy="482.7" r="22.8" fill="url(#cg)" stroke="#0d0d0d" stroke-width="1.6"/>
<circle cx="32.9" cy="811.8" r="22.8" fill="url(#cg)" stroke="#0d0d0d" stroke-width="1.6"/>
</g>
<path d="M19 94.5 Q30.7 100 42.5 94.5" fill="none" stroke="#5e5e5e" stroke-width="1.9"/>
<path d="M20.3 500.6 Q32 506.1 43.8 500.6" fill="none" stroke="#5e5e5e" stroke-width="1.9"/>
<path d="M21.2 829.7 Q32.9 835.2 44.7 829.7" fill="none" stroke="#5e5e5e" stroke-width="1.9"/>
<path d="M27.9 65.5 H34.4 V83.4 H39 V88.6 H22.7 V83.4 H27.9 V75.3 L22.7 71 Z" fill="#f2f2f2"/>
<path d="M23.9 478.2 C24.2 473.6 27.8 471.6 32.1 471.6 C36.8 471.6 40.2 474.3 40.2 478.6 C40.2 481.5 38.6 483.5 36.2 485.6 L32.5 489.2 H40.2 V494.8 H23.9 V490.5 L32.1 482.6 C33.9 480.9 34.6 480.0 34.6 478.9 C34.6 477.6 33.6 476.8 32.2 476.8 C30.7 476.8 29.7 477.8 29.6 479.3 Z" fill="#f2f2f2"/>
<path d="M26 800 H40.2 V804.6 L35.6 809.2 C39.2 809.9 41.3 812.4 41.3 816.3 C41.3 821.2 37.6 824.2 32.4 824.2 C28.8 824.2 26.1 823.0 24.6 821.2 L27.4 817.4 C28.6 818.6 30.3 819.3 32.2 819.3 C34.4 819.3 35.8 818.1 35.8 816.2 C35.8 814.3 34.3 813.2 31.6 813.2 H29.6 V809.8 L33.4 805.4 H26 Z" fill="#f2f2f2"/>
</svg>
<svg class="abs" style="left:0;top:0;filter:drop-shadow(2px 2px 2px rgba(0,0,0,.3))" width="1056" height="924" viewBox="0 0 1056 924">
<path d="M237 236 C 300 280, 300 400, 198 455" fill="none" stroke="#f5a71a" stroke-width="5" stroke-linecap="round"/>
<path d="M184 462 L194 444 L206 460 Z" fill="#f5a71a"/>
<path d="M191 511 C 300 570, 300 700, 250 790" fill="none" stroke="#f5a71a" stroke-width="5" stroke-linecap="round"/>
<path d="M239 801 L240 781 L256 790 Z" fill="#f5a71a"/>
</svg>
<svg class="abs" style="left:468px;top:84px" width="27" height="34" viewBox="0 0 27 34">
<path d="M8.2 1.3 Q8.5 0.4 10.5 0.4 Q12.8 0.4 12.8 1.6 V8.4 H15.6 L16.4 9.2 H18.6 L19.3 10 H21.6 L24.6 12.6 V24.6 L18.9 31.5 H12 L0.5 18.2 L1.9 16.4 H4.8 L8.2 19.6 Z" fill="#2b1a08" stroke="#000" stroke-width="1.3" stroke-linejoin="round"/>
<path d="M9 1.5 H12.2 V13.3 H9 Z M12.2 9.2 H15.4 L16.2 10 H18.4 L19.1 10.8 H21.4 L23.9 13 V13.3 H12.2 Z" fill="#120a03"/>
<path d="M9.6 1.6 H11.6" stroke="#9a9a9a" stroke-width="0.9"/>
<path d="M9.3 13.5 H24" stroke="#8c7456" stroke-width="0.9" stroke-dasharray="2.2 1.2"/></svg>
<svg class="abs" style="left:497px;top:490.7px" width="27" height="34" viewBox="0 0 27 34">
<path d="M8.2 1.3 Q8.5 0.4 10.5 0.4 Q12.8 0.4 12.8 1.6 V8.4 H15.6 L16.4 9.2 H18.6 L19.3 10 H21.6 L24.6 12.6 V24.6 L18.9 31.5 H12 L0.5 18.2 L1.9 16.4 H4.8 L8.2 19.6 Z" fill="#2b1a08" stroke="#000" stroke-width="1.3" stroke-linejoin="round"/>
<path d="M9 1.5 H12.2 V13.3 H9 Z M12.2 9.2 H15.4 L16.2 10 H18.4 L19.1 10.8 H21.4 L23.9 13 V13.3 H12.2 Z" fill="#120a03"/>
<path d="M9.6 1.6 H11.6" stroke="#9a9a9a" stroke-width="0.9"/>
<path d="M9.3 13.5 H24" stroke="#8c7456" stroke-width="0.9" stroke-dasharray="2.2 1.2"/></svg>
</body></html>
